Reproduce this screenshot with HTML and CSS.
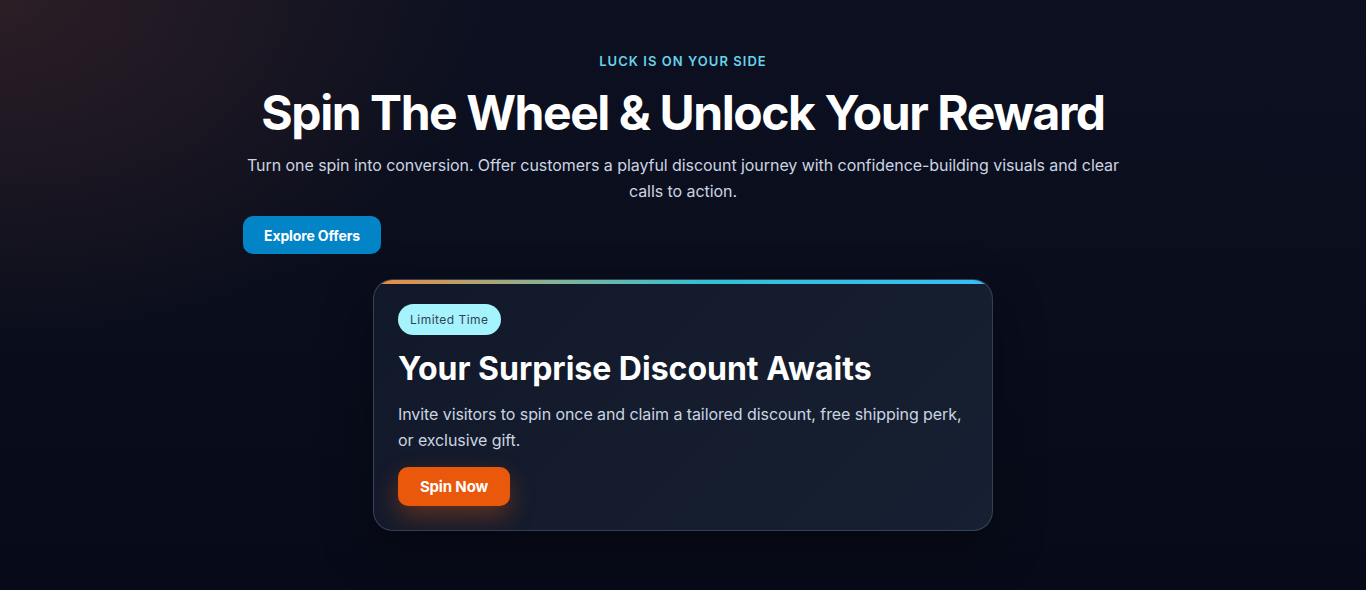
FILE: index.html
```html
<!DOCTYPE html>
<html lang="en">
<head>
<meta charset="utf-8">
<title>Spin The Wheel</title>
<link rel="stylesheet" href="styles.css">
</head>
<body>
<main class="hero">
  <div class="container">
    <p class="eyebrow">LUCK IS ON YOUR SIDE</p>
    <h1 class="title">Spin The Wheel &amp; Unlock Your Reward</h1>
    <p class="lead">Turn one spin into conversion. Offer customers a playful discount journey with confidence-building visuals and clear calls to action.</p>
    <div class="actions">
      <a class="btn btn-blue" href="#">Explore Offers</a>
    </div>
    <div class="card">
      <span class="badge">Limited Time</span>
      <h2 class="card-title">Your Surprise Discount Awaits</h2>
      <p class="card-text">Invite visitors to spin once and claim a tailored discount, free shipping perk, or exclusive gift.</p>
      <a class="btn btn-orange" href="#">Spin Now</a>
    </div>
  </div>
</main>
</body>
</html>
```

FILE: styles.css
```css
* { box-sizing: border-box; }
html, body { margin: 0; height: 100%; }
body {
  font-family: Inter, "Noto Sans", sans-serif;
  color: #fff;
  background:
    radial-gradient(ellipse 700px 500px at 0 0, rgba(70, 42, 42, 0.55), rgba(70, 42, 42, 0) 70%),
    linear-gradient(180deg, #0c1020 0%, #070b19 100%);
  background-color: #070b19;
  min-height: 590px;
}
.hero { padding-top: 53px; }
.container {
  width: 880px;
  margin: 0 auto;
  text-align: center;
}
.eyebrow {
  margin: 0;
  font-size: 13px;
  font-weight: 600;
  letter-spacing: 0.08em;
  color: #67d3e8;
  line-height: 16px;
}
.title {
  margin: 15px 0 0;
  font-size: 48px;
  font-weight: 700;
  letter-spacing: -0.03em;
  line-height: 58px;
}
.lead {
  margin: 10px 0 0;
  font-size: 16px;
  line-height: 26px;
  letter-spacing: -0.06px;
  color: #cbd5e1;
}
.actions {
  display: flex;
  margin-top: 12px;
}
.btn {
  display: inline-flex;
  align-items: center;
  justify-content: center;
  font-weight: 700;
  font-size: 14px;
  color: #fff;
  text-decoration: none;
  border-radius: 10px;
  letter-spacing: -0.01em;
}
.btn-blue {
  width: 138px;
  height: 38px;
  background: #0284c7;
}
.card {
  position: relative;
  width: 620px;
  margin: 25px auto 0;
  text-align: left;
  padding: 24px;
  border: 1px solid rgba(148, 163, 184, 0.28);
  border-radius: 20px;
  background: linear-gradient(135deg, #111829 0%, #172032 100%);
  box-shadow: 0 20px 50px rgba(0, 0, 0, 0.35);
  overflow: hidden;
}
.card::before {
  content: "";
  position: absolute;
  top: 0; left: 0; right: 0;
  height: 4px;
  background: linear-gradient(90deg, #f08a3c 0%, #7fb59a 30%, #2ec3d6 55%, #38bdf8 100%);
}
.badge {
  display: inline-flex;
  align-items: center;
  height: 31px;
  padding: 0 12px;
  border-radius: 999px;
  background: #a5f3fc;
  color: #334155;
  font-size: 12px;
  letter-spacing: 0.04em;
}
.card-title {
  margin: 14px 0 0;
  font-size: 32px;
  font-weight: 700;
  letter-spacing: 0;
  line-height: 40px;
}
.card-text {
  margin: 12px 0 0;
  font-size: 16px;
  line-height: 26px;
  letter-spacing: -0.08px;
  color: #cbd5e1;
}
.btn-orange {
  margin-top: 14px;
  width: 112px;
  height: 39px;
  background: #ea580c;
  font-size: 15px;
  box-shadow: 0 10px 25px rgba(234, 88, 12, 0.35);
}
```
